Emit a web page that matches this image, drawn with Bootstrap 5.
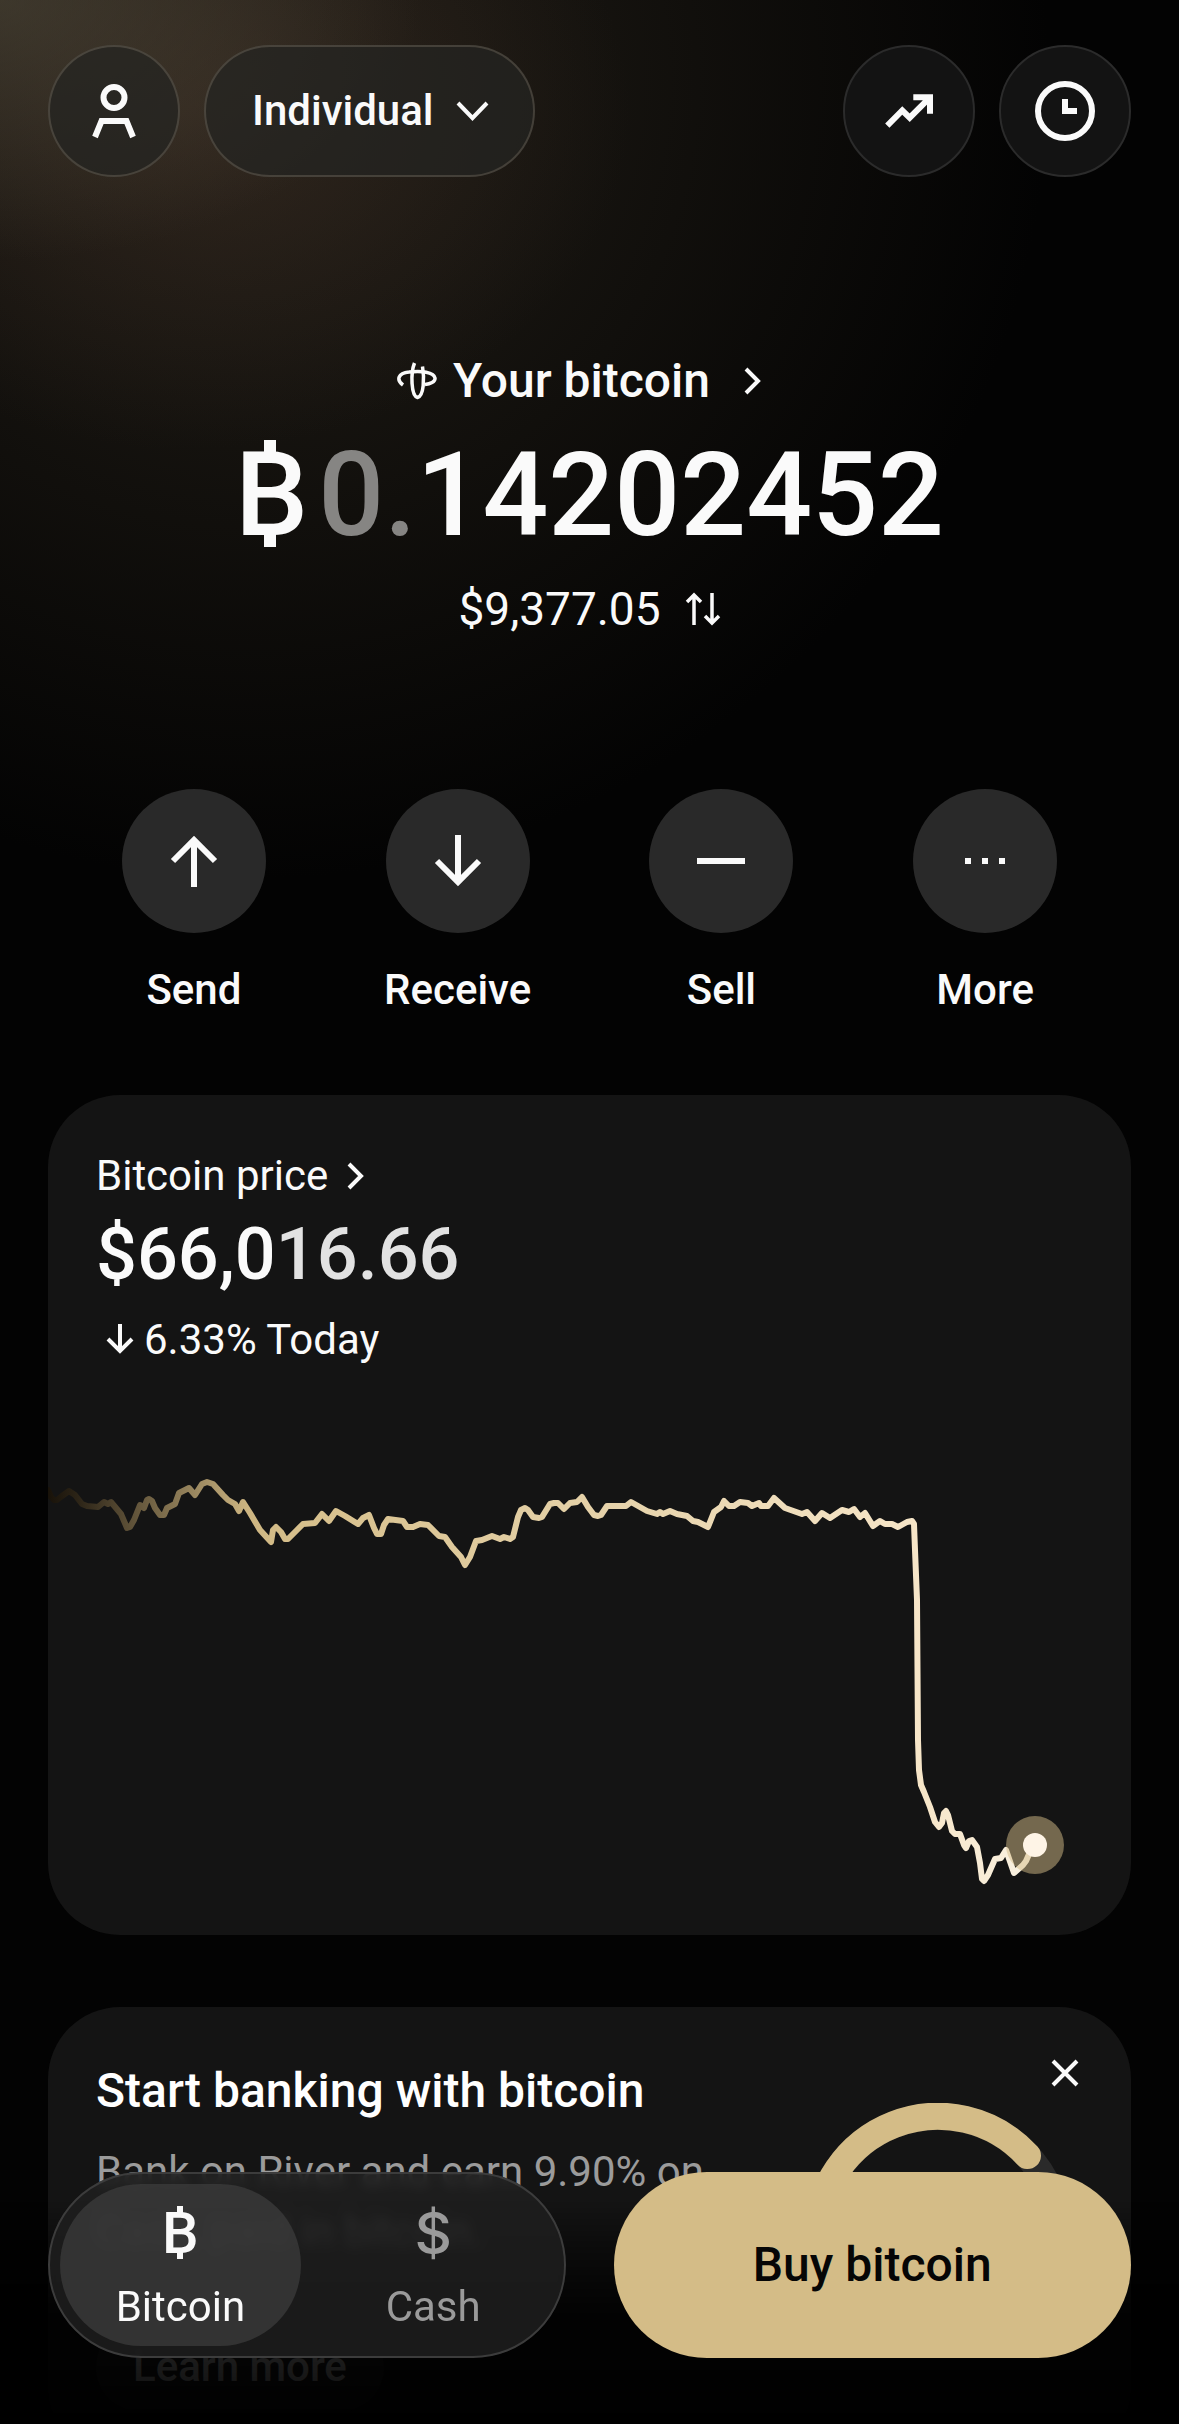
<!DOCTYPE html>
<html lang="en" data-bs-theme="dark">
<head>
<meta charset="utf-8">
<meta name="viewport" content="width=device-width, initial-scale=1">
<title>Your bitcoin</title>
<link href="https://cdn.jsdelivr.net/npm/bootstrap@5.3.0/dist/css/bootstrap.min.css" rel="stylesheet">
<style>
  :root { --ink: #fafafa; --gold: #d4bc87; --panel: #141414; }
  body { background: #030303; color: var(--ink); font-family: Roboto, "Liberation Sans", sans-serif; font-size: 42px; line-height: 54px; }
  a, button, .btn { color: inherit; }
  svg { display: block; flex: none; }
  .stroke { fill: none; stroke: currentColor; }
  .app-shell {
    background:
      radial-gradient(ellipse 420px 260px at 0 0, rgba(84, 78, 62, .55), transparent),
      radial-gradient(ellipse 440px 340px at 190px 110px, rgba(62, 46, 36, .5), transparent),
      radial-gradient(ellipse 800px 800px at 250px 80px, rgba(40, 35, 27, .85), transparent),
      #030303;
  }
  .top-bar { padding: 45px 48px 0; gap: 24px; }
  .btn.glass { height: 132px; min-width: 132px; border: 2px solid rgba(205, 190, 165, .2); border-radius: 66px; background: rgba(36, 36, 34, .75); color: var(--ink); font-size: inherit; line-height: inherit; font-weight: 500; gap: 22px; }
  .btn.glass.wide { padding: 0 44px 0 46px; }
  .btn.glass.plain { background: #131313; border-color: #2b2b2b; }
  .headline { margin-top: 174px; gap: 28px; }
  .size-l { font-size: 48px; line-height: 60px; font-weight: 500; }
  .holding { font-size: 116px; line-height: 112px; font-weight: 500; }
  .coin-sign { position: relative; display: inline-block; }
  .coin-sign::before, .coin-sign::after { content: ""; position: absolute; left: 40%; width: .1em; height: .13em; background: currentColor; }
  .coin-sign::before { bottom: calc(50% + .34em); }
  .coin-sign::after { top: calc(50% + .32em); }
  .holding .coin-sign { margin-right: 10px; }
  .faint { color: #868583; }
  .fiat { font-size: 46px; line-height: 60px; gap: 24px; }
  .actions { margin: 150px 62px 78px; }
  .actions .btn { font-size: inherit; line-height: inherit; font-weight: 500; color: var(--ink); gap: 30px; }
  .disc { width: 144px; height: 144px; border-radius: 50%; background: #292929; }
  .panel { margin: 0 48px; border-radius: 72px; background: var(--panel); overflow: hidden; }
  .price-text { padding: 54px 48px 67px; }
  .price { font-size: 72px; line-height: 104px; font-weight: 500; }
  .price span { color: #e2e2e2; }
  .change { line-height: 66px; }
  .promo { margin-top: 72px; padding: 48px; }
  .promo h2 { margin: 6px 0 21px; }
  .promo p { line-height: 60px; margin: 0 0 60px; color: #9b9b9b; }
  .promo .btn-more { height: 90px; padding: 0 36px; border-radius: 45px; background: #262626; color: var(--ink); font-size: inherit; line-height: inherit; font-weight: 500; }
  .promo-side { gap: 12px; }
  .gauge { margin-right: 10px; }
  .dock { padding: 0 48px 66px; gap: 48px; background: linear-gradient(rgba(0,0,0,0) 12%, rgba(0,0,0,.45) 32%, rgba(0,0,0,.85) 55%, rgba(0,0,0,.9) 78%, rgba(0,0,0,.97)); }
  .dock > * { flex: 1 1 0; height: 186px; border-radius: 93px; }
  .tabs { padding: 10px; gap: 12px; border: 2px solid #3c3c3c; background: rgba(30, 30, 30, .85); backdrop-filter: blur(6px); }
  .tabs .btn { flex: 1 1 0; gap: 14px; padding: 16px 0 12px; border: 0; border-radius: 81px; font-size: inherit; line-height: inherit; color: #9a9a9a; }
  .tabs .btn.active { background: rgba(64, 64, 64, .65); color: var(--ink); }
  .tab-sign { font-size: 58px; line-height: 66px; font-weight: 500; }
  .tab-dollar { font-family: Inter, Roboto, sans-serif; }
  .btn.buy { background: var(--gold); border: 0; color: #060606; }
</style>
</head>
<body>
<div class="app-shell vh-100 overflow-hidden">
  <header class="top-bar d-flex align-items-center">
    <button class="btn glass p-0 d-flex align-items-center justify-content-center" type="button" aria-label="Profile">
      <svg width="60" height="60" viewBox="0 0 60 60" class="stroke" stroke-width="6"><circle cx="30" cy="16.5" r="10.5"/><path d="M11 56 17.500 40H42.500L49 56"/></svg>
    </button>
    <button class="btn glass wide d-flex align-items-center me-auto" type="button">
      Individual
      <svg width="33" height="22" viewBox="0 0 33 22" class="stroke" stroke-width="4"><path d="M2 3 16.500 18 31 3"/></svg>
    </button>
    <button class="btn glass plain p-0 d-flex align-items-center justify-content-center" type="button" aria-label="Trends">
      <svg width="60" height="60" viewBox="0 0 60 60" class="stroke" stroke-width="6"><path d="M8.300 44.700 23.300 29.500 30.700 36.700 50 17.300M34.300 16.300H51V32.700"/></svg>
    </button>
    <button class="btn glass plain p-0 d-flex align-items-center justify-content-center" type="button" aria-label="History">
      <svg width="60" height="60" viewBox="0 0 60 60" class="stroke" stroke-width="6"><circle cx="30" cy="30" r="27"/><path d="M30 18V30H42"/></svg>
    </button>
  </header>

  <main>
    <section class="headline d-flex flex-column align-items-center">
      <a href="#holdings" class="size-l text-decoration-none d-flex align-items-center">
        <svg width="40" height="40" viewBox="0 0 40 40" class="stroke me-3" stroke-width="3.500"><path d="M6 24C-1 19 1 12 12 11C24 9.500 37 11 38 17C38.500 21 33 23 28 23.500"/><path d="M17.500 2C13.500 12 14 35 20.500 36.500C27 35 27.500 17 25.500 5.500"/></svg>
        Your bitcoin
        <svg width="48" height="48" viewBox="0 0 48 48" class="stroke ms-4" stroke-width="4"><path d="M12 12 24 24 12 36"/></svg>
      </a>
      <div class="holding"><span class="coin-sign">B</span><span class="faint">0.</span>14202452</div>
      <button type="button" class="btn p-0 border-0 fiat d-flex align-items-center">
        $9,377.05
        <svg width="36" height="36" viewBox="0 0 36 36" class="stroke" stroke-width="3.500"><path d="M9 34V4M2 11 9 4 16 11M27 2V32M20 25 27 32 34 25"/></svg>
      </button>
    </section>

    <nav class="actions row g-0 text-center">
      <div class="col"><button type="button" class="btn p-0 border-0 w-100 d-flex flex-column align-items-center">
        <span class="disc d-flex align-items-center justify-content-center"><svg width="60" height="60" viewBox="0 0 60 60" class="stroke" stroke-width="6"><path d="M30 56V9M9 30 30 9 51 30"/></svg></span>Send</button></div>
      <div class="col"><button type="button" class="btn p-0 border-0 w-100 d-flex flex-column align-items-center">
        <span class="disc d-flex align-items-center justify-content-center"><svg width="60" height="60" viewBox="0 0 60 60" class="stroke" stroke-width="6"><path d="M30 4V51M9 30 30 51 51 30"/></svg></span>Receive</button></div>
      <div class="col"><button type="button" class="btn p-0 border-0 w-100 d-flex flex-column align-items-center">
        <span class="disc d-flex align-items-center justify-content-center"><svg width="60" height="60" viewBox="0 0 60 60" class="stroke" stroke-width="6"><path d="M6 30H54"/></svg></span>Sell</button></div>
      <div class="col"><button type="button" class="btn p-0 border-0 w-100 d-flex flex-column align-items-center">
        <span class="disc d-flex align-items-center justify-content-center"><svg width="60" height="60" viewBox="0 0 60 60" class="stroke" stroke-width="6"><path d="M10 30H16M27 30H33M44 30H50"/></svg></span>More</button></div>
    </nav>

    <section class="panel">
      <div class="price-text">
        <a href="#price" class="text-decoration-none d-flex align-items-center">Bitcoin price
          <svg width="20" height="30" viewBox="0 0 20 30" class="stroke ms-3" stroke-width="4"><path d="M5 3 17 15 5 27"/></svg></a>
        <div class="price">$66,0<span>16.66</span></div>
        <div class="change d-flex align-items-center">
          <svg width="48" height="48" viewBox="0 0 48 48" class="stroke" stroke-width="4"><path d="M24 8V34M12 23 24 35 36 23"/></svg>6.33% Today</div>
      </div>
      <svg class="w-100" viewBox="0 0 1083 495" role="img" aria-label="Bitcoin price today">
        <defs><linearGradient id="fade" gradientUnits="userSpaceOnUse" x1="0" y1="0" x2="1000" y2="0">
          <stop offset="0" stop-color="#181209"/><stop offset=".03" stop-color="#2c2417"/><stop offset=".2" stop-color="#cdb581"/><stop offset=".24" stop-color="#d6bf8b"/><stop offset=".6" stop-color="#e8d5ae"/><stop offset=".88" stop-color="#f7e6c9"/><stop offset="1" stop-color="#f9f3e6"/>
        </linearGradient></defs>
        <polyline fill="none" stroke="url(#fade)" stroke-width="6" stroke-linejoin="round" stroke-linecap="round" points="0,50 3,57 6,60 9,60 14,56 21,51 27,55 34,64 39,66 50,67 56,62 60,64 63,62 73,74 79,88 82,87 86,80 92,65 96,68 99,60 101,59 104,61 107,68 112,75 116,75 119,68 127,64 131,53 141,48 147,55 154,44 159,42 165,44 175,55 180,60 187,64 191,71 195,62 202,73 212,90 223,102 225,90 228,87 233,92 237,99 240,99 249,90 255,84 267,83 274,74 281,81 288,71 297,76 310,84 315,78 321,75 326,88 329,94 333,94 336,85 340,79 355,81 359,87 365,87 372,84 380,85 388,93 391,96 397,97 404,107 413,117 417,125 422,117 428,101 434,100 444,96 452,99 456,97 462,99 465,97 470,77 473,70 477,68 480,70 485,77 491,78 494,77 502,64 506,63 510,63 516,69 522,63 529,62 534,57 540,67 546,75 550,76 553,75 559,66 578,66 583,62 599,71 609,74 612,72 615,74 622,71 629,74 639,76 645,81 650,82 660,87 666,72 673,67 676,61 681,66 686,66 692,62 700,63 704,66 711,63 713,66 720,66 726,58 737,68 754,74 759,72 767,81 774,73 782,78 794,70 801,72 806,69 812,77 817,73 825,86 832,81 837,84 844,84 850,87 859,82 864,81 866,84 867,110 869,160 870,300 871,330 873,345 876,352 882,367 887,382 891,387 894,383 896,373 898,371 900,375 904,391 907,394 912,394 916,405 918,408 921,401 924,400 929,407 932,423 934,439 936,441 940,435 947,419 953,418 958,410 966,433 975,425 978,421 982,412 987,405"/>
        <circle cx="987" cy="405" r="29" fill="#d4bc87" fill-opacity=".5"/>
        <circle cx="987" cy="405" r="12" fill="#fef4e6"/>
      </svg>
    </section>

    <section class="panel promo d-flex justify-content-between">
      <div>
        <h2 class="size-l">Start banking with bitcoin</h2>
        <p>Bank on River and earn 9.90% on<br>Cash, paid in bitcoin.</p>
        <button type="button" class="btn btn-more">Learn more</button>
      </div>
      <div class="promo-side d-flex flex-column align-items-end">
        <button type="button" class="btn p-0 border-0" aria-label="Close">
          <svg width="36" height="36" viewBox="0 0 36 36" class="stroke" stroke-width="4"><path d="M6 6 30 30M30 6 6 30"/></svg></button>
        <svg class="gauge" width="270" height="150" viewBox="0 0 270 150" fill="none" stroke-width="27" stroke-linecap="round">
          <path d="M13.500 135A121.500 121.500 0 0 1 256.500 135" stroke="#2a2a2a"/>
          <path d="M13.500 135A121.500 121.500 0 0 1 224.500 52.600" stroke="#d4bc87"/></svg>
      </div>
    </section>
  </main>

  <footer class="dock fixed-bottom d-flex">
    <div class="tabs d-flex">
      <button type="button" class="btn active d-flex flex-column align-items-center"><span class="tab-sign coin-sign">B</span>Bitcoin</button>
      <button type="button" class="btn d-flex flex-column align-items-center"><span class="tab-sign tab-dollar">$</span>Cash</button>
    </div>
    <button type="button" class="btn buy size-l">Buy bitcoin</button>
  </footer>
</div>
<script src="https://cdn.jsdelivr.net/npm/bootstrap@5.3.0/dist/js/bootstrap.bundle.min.js"></script>
</body>
</html>
